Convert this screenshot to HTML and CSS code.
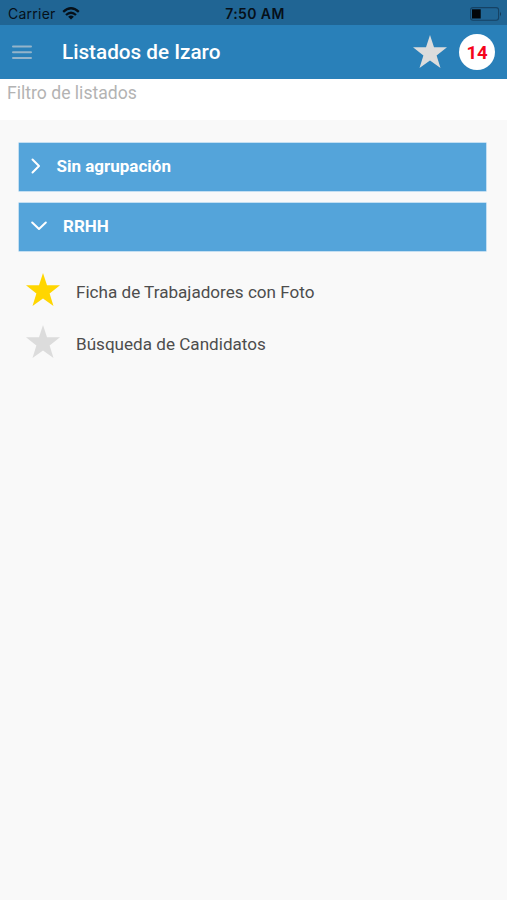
FILE: index.html
```html
<!DOCTYPE html>
<html lang="es">
<head>
<meta charset="utf-8">
<title>Listados de Izaro</title>
<link rel="stylesheet" href="styles.css">
</head>
<body>
<svg class="symbols" aria-hidden="true">
  <symbol id="star" viewBox="0 0 34 34"><path d="M17 0L21 12.3H34L23.6 20.4L27.5 33L17 25.6L6.5 33L10.4 20.4L0 12.3H13Z"/></symbol>
</svg>
<div class="status">
  <div class="carrier"><span class="carrier-name">Carrier</span>
    <svg class="wifi" viewBox="0 0 18 13" fill="none" stroke="#061019" stroke-width="2.3"><path d="M1.2 4.8Q9-2.2 16.8 4.8M4 8Q9 3.4 14 8"/><path d="M9 12.4L6.1 9.7Q9 7.4 11.9 9.7Z" fill="#061019" stroke="none"/></svg>
  </div>
  <span class="time">7:50 AM</span>
  <svg class="battery" viewBox="0 0 32 14"><rect x=".6" y=".6" width="28" height="12.6" rx="2.5" fill="none" stroke="#154264" stroke-width="1.1"/><rect x="2" y="2.3" width="8.7" height="9.2" fill="#020609"/><path d="M30 4.5Q31.8 7 30 9.5Z" fill="#102e45"/></svg>
</div>
<header class="header">
  <svg class="menu" viewBox="0 0 20 16" stroke="#94b4ca" stroke-width="2" stroke-linecap="round"><path d="M1 2.5H19M1 8.2H19M1 13.9H19"/></svg>
  <h1 class="title">Listados de Izaro</h1>
  <svg class="star header-star"><use href="#star"/></svg>
  <span class="badge">14</span>
</header>
<div class="filter">Filtro de listados</div>
<main class="content">
  <section class="group">
    <svg class="chevron right" viewBox="0 0 10 16"><path d="M1.5 1.5L8 8L1.5 14.5"/></svg>
    <span class="group-name sin">Sin agrupación</span>
  </section>
  <section class="group">
    <svg class="chevron down" viewBox="0 0 16 10"><path d="M1.2 1.5L8 8L14.8 1.5"/></svg>
    <span class="group-name rrhh">RRHH</span>
  </section>
  <ul class="items">
    <li class="item"><svg class="star gold"><use href="#star"/></svg><span class="ficha">Ficha de Trabajadores con Foto</span></li>
    <li class="item"><svg class="star"><use href="#star"/></svg><span class="busqueda">Búsqueda de Candidatos</span></li>
  </ul>
</main>
</body>
</html>
```

FILE: styles.css
```css
* { box-sizing: border-box; }
body { margin: 0; min-height: 900px; background: #f9f9f9; font-family: Roboto, sans-serif; white-space: nowrap; }
svg { display: block; flex: none; }
.symbols { width: 0; height: 0; position: absolute; }
.status { height: 25px; background: #206594; color: #061019; display: grid; grid-template-columns: 1fr auto 1fr; align-items: center; padding: 2px 5px 0 8px; }
.carrier { display: flex; align-items: center; gap: 6px; font: 14px/20px Inter, sans-serif; letter-spacing: .25px; }
.wifi { width: 18px; height: 13px; }
.time { font: 600 14px/20px Inter, sans-serif; letter-spacing: .4px; }
.battery { width: 32px; height: 14px; justify-self: end; }
.header { height: 54px; background: #2980b9; display: flex; align-items: center; padding: 0 12px; }
.menu { width: 20px; height: 16px; }
.title { margin: 0 auto 0 30px; color: #fff; font: 500 20.7px/24px Roboto, sans-serif; }
.star { width: 34px; height: 34px; fill: #dcdcdc; }
.gold { fill: #ffd600; }
.header-star { margin-right: 12px; }
.badge { width: 36px; height: 36px; border-radius: 50%; background: #fff; color: #f5051b; display: flex; align-items: center; justify-content: center; padding-top: 2px; font: 700 18.5px/20px Roboto, sans-serif; }
.filter { height: 41px; background: #fff; color: #b3b3b3; padding: 4px 7px; font: 17.6px/20px Roboto, sans-serif; }
.content { padding: 23px 21px 0 19px; }
.group { height: 48px; margin-bottom: 12px; padding: 0 0 2px 12px; background: #54a4da; box-shadow: 0 0 0 .5px #8fc6eb; color: #fff; display: flex; align-items: center; }
.chevron { fill: none; stroke: #fff; stroke-width: 2; stroke-linecap: round; stroke-linejoin: round; }
.right { width: 10px; height: 16px; margin-right: 15.5px; }
.down { width: 16px; height: 10px; margin-right: 16px; }
.group-name { font: 700 17px/20px Roboto, sans-serif; }
.items { list-style: none; margin: 0; padding: 10px 0 0 6.5px; }
.item { height: 53px; display: flex; align-items: flex-start; gap: 16.5px; color: #4d4d4d; font: 17.1px/38px Roboto, sans-serif; }
.item + .item { margin-top: -1px; }
```
